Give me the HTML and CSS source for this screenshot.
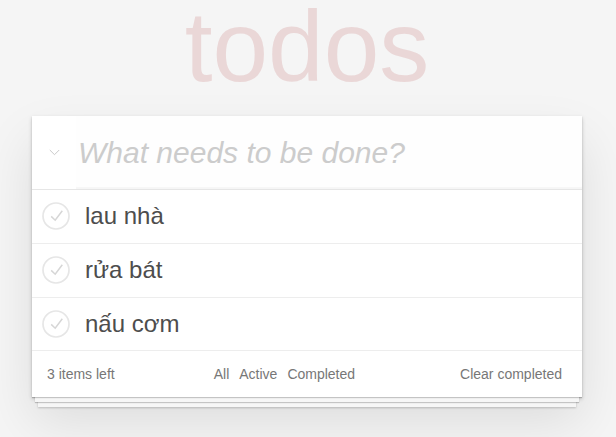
FILE: index.html
```html
<!DOCTYPE html>
<html lang="vi">
<head>
<meta charset="utf-8">
<title>todos</title>
<link rel="stylesheet" href="styles.css">
</head>
<body>
<section class="todoapp">
  <h1 class="title">todos</h1>
  <div class="card">
    <header class="header">
      <span class="toggle-all">
        <svg width="11" height="7" viewBox="0 0 11 7"><polyline points="0.8,1 5.5,5.7 10.2,1" fill="none" stroke="#c9c9c9" stroke-width="1"/></svg>
      </span>
      <input class="new-todo" placeholder="What needs to be done?">
    </header>
    <ul class="todo-list">
      <li class="todo">
        <svg class="toggle" width="30" height="30" viewBox="0 0 30 30"><circle cx="15" cy="15" r="13" fill="none" stroke="#e6e6e6" stroke-width="1.7"/><polyline points="10.2,15.4 14.2,19.2 21.3,9.8" fill="none" stroke="#d6d6d6" stroke-width="1.5"/></svg>
        <label class="label">lau nhà</label>
      </li>
      <li class="todo">
        <svg class="toggle" width="30" height="30" viewBox="0 0 30 30"><circle cx="15" cy="15" r="13" fill="none" stroke="#e6e6e6" stroke-width="1.7"/><polyline points="10.2,15.4 14.2,19.2 21.3,9.8" fill="none" stroke="#d6d6d6" stroke-width="1.5"/></svg>
        <label class="label">rửa bát</label>
      </li>
      <li class="todo">
        <svg class="toggle" width="30" height="30" viewBox="0 0 30 30"><circle cx="15" cy="15" r="13" fill="none" stroke="#e6e6e6" stroke-width="1.7"/><polyline points="10.2,15.4 14.2,19.2 21.3,9.8" fill="none" stroke="#d6d6d6" stroke-width="1.5"/></svg>
        <label class="label">nấu cơm</label>
      </li>
    </ul>
    <footer class="footer">
      <span class="todo-count">3 items left</span>
      <ul class="filters">
        <li><a class="filter">All</a></li>
        <li><a class="filter">Active</a></li>
        <li><a class="filter">Completed</a></li>
      </ul>
      <button class="clear-completed">Clear completed</button>
    </footer>
  </div>
</section>
</body>
</html>
```

FILE: styles.css
```css
html {
  background: #f5f5f5;
}

html, body {
  margin: 0;
  padding: 0;
}

body {
  background: #f5f5f5;
  color: #4d4d4d;
  font-family: "Liberation Sans", Arial, Helvetica, sans-serif;
  font-size: 14px;
  min-height: 437px;
}

.todoapp {
  width: 550px;
  margin: 0 0 0 32px;
  padding-bottom: 40px;
}

.title {
  margin: 0 0 24px 0;
  height: 92px;
  font-size: 100px;
  line-height: 92px;
  font-weight: 100;
  text-align: center;
  color: rgba(175, 47, 47, 0.15);
}

.card {
  background: #fff;
  box-shadow:
    0 1px 1px rgba(0, 0, 0, 0.2),
    0 8px 0 -3px #f6f6f6,
    0 9px 1px -3px rgba(0, 0, 0, 0.2),
    0 16px 0 -6px #f6f6f6,
    0 17px 2px -6px rgba(0, 0, 0, 0.2),
    0 2px 4px 0 rgba(0, 0, 0, 0.2),
    0 25px 50px 0 rgba(0, 0, 0, 0.1);
}

.header {
  display: flex;
  height: 73px;
  border-bottom: 1px solid #e6e6e6;
}

.toggle-all {
  width: 44px;
  display: flex;
  align-items: center;
  justify-content: center;
}

.toggle-all svg {
  display: block;
}

.new-todo {
  flex: 1;
  min-width: 0;
  height: 73px;
  box-sizing: border-box;
  margin: 0;
  border: 0;
  outline: none;
  padding: 0 16px 0 2px;
  font-family: inherit;
  font-size: 30px;
  color: #4d4d4d;
  background: rgba(0, 0, 0, 0.003);
  box-shadow: inset 0 -2px 1px rgba(0, 0, 0, 0.03);
}

.new-todo::placeholder {
  font-style: italic;
  color: #cccccc;
}

.todo-list {
  margin: 0;
  padding: 0;
  list-style: none;
}

.todo {
  display: flex;
  align-items: center;
  border-bottom: 1px solid #ededed;
  font-size: 24px;
}

.toggle {
  display: block;
  flex: none;
  margin-left: 9px;
}

.label {
  display: block;
  margin-left: 14px;
  padding: 12px 0;
  line-height: 1.2;
  color: #4d4d4d;
}

.footer {
  display: flex;
  align-items: center;
  justify-content: space-between;
  height: 46px;
  padding: 0 20px 0 15px;
  color: #777;
  font-size: 14px;
}

.todo-count {
  white-space: nowrap;
}

.filters {
  display: flex;
  gap: 10px;
  margin: 0;
  padding: 0 6px 0 0;
  list-style: none;
}

.filter {
  color: inherit;
  text-decoration: none;
}

.clear-completed {
  margin: 0;
  padding: 0;
  border: 0;
  background: none;
  font-family: inherit;
  font-size: 14px;
  color: inherit;
}
```
